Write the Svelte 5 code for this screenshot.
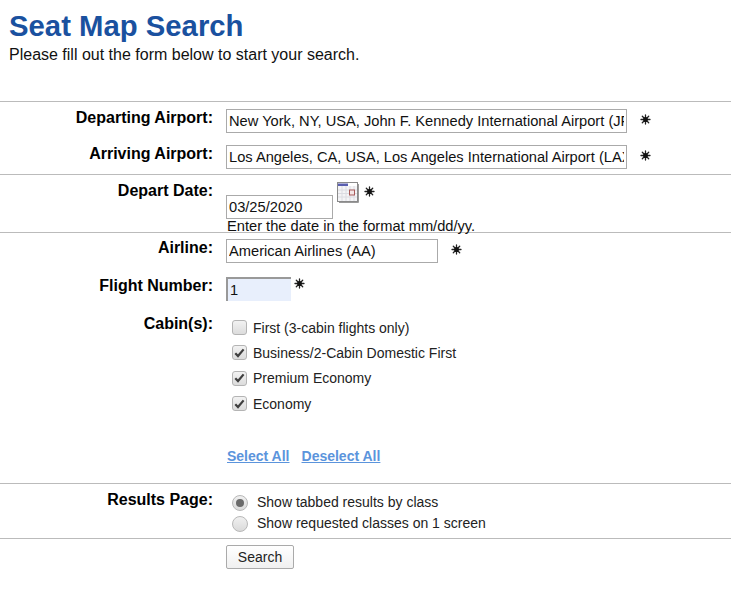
<script>
  const cabins = [
    { name: 'First (3-cabin flights only)', checked: false },
    { name: 'Business/2-Cabin Domestic First', checked: true },
    { name: 'Premium Economy', checked: true },
    { name: 'Economy', checked: true }
  ];
</script>

{#snippet req()}
  <svg class="req" width="11" height="11" viewBox="0 0 11 11" aria-hidden="true">
    <g stroke="#222" stroke-width="1.3" stroke-linecap="round">
      <path d="M5.5 1v9M1 5.5h9M2.3 2.3l6.4 6.4M8.7 2.3l-6.4 6.4" />
    </g>
    <circle cx="5.5" cy="5.5" r="2.4" fill="#111" />
  </svg>
{/snippet}

<main class="page">
  <h1>Seat Map Search</h1>
  <p class="intro">Please fill out the form below to start your search.</p>

  <form class="form" onsubmit={(e) => e.preventDefault()}>
    <section class="group airports">
      <div class="row">
        <div class="label">Departing Airport:</div>
        <div class="field">
          <input class="text wide" value="New York, NY, USA, John F. Kennedy International Airport (JFK)" />
          <span class="mark far">{@render req()}</span>
        </div>
      </div>
      <div class="row">
        <div class="label">Arriving Airport:</div>
        <div class="field">
          <input class="text wide" value="Los Angeles, CA, USA, Los Angeles International Airport (LAX)" />
          <span class="mark far">{@render req()}</span>
        </div>
      </div>
    </section>

    <section class="group date">
      <div class="row">
        <div class="label">Depart Date:</div>
        <div class="field column">
          <div class="date-line">
            <input class="text date-input" value="03/25/2020" />
            <svg class="cal" width="22" height="21" viewBox="0 0 22 21" aria-hidden="true">
              <rect x="0.5" y="0.5" width="20" height="19" fill="#f4f4f6" stroke="#8a8a8a" />
              <rect x="1" y="1" width="19" height="3" fill="#fff" />
              <rect x="1" y="1.5" width="10" height="2.5" fill="#5a5fb0" />
              <path d="M1 8h19M1 11.5h19M1 15h19M5 4v15M9 4v15M13 4v15M17 4v15" stroke="#dcdce2" stroke-width="1" />
              <rect x="12.5" y="8" width="5" height="5" fill="#f4e6e6" stroke="#a85a5a" />
              <path d="M21.5 2v18.5H2" fill="none" stroke="#9a9a9a" />
            </svg>
            <span class="mark date-mark">{@render req()}</span>
          </div>
          <div class="hint">Enter the date in the format mm/dd/yy.</div>
        </div>
      </div>
    </section>

    <section class="group flight">
      <div class="row">
        <div class="label">Airline:</div>
        <div class="field">
          <input class="text airline" value="American Airlines (AA)" />
          <span class="mark far">{@render req()}</span>
        </div>
      </div>
      <div class="row number">
        <div class="label">Flight Number:</div>
        <div class="field">
          <input class="flightno" value="1" />
          <span class="mark near">{@render req()}</span>
        </div>
      </div>
      <div class="row cabins">
        <div class="label">Cabin(s):</div>
        <div class="field column">
          {#each cabins as c}
            <label class="opt">
              <span class="box">
                {#if c.checked}
                  <svg width="11" height="10" viewBox="0 0 11 10" aria-hidden="true">
                    <path d="M1.3 5.2 4 8l5.6-6.6" fill="none" stroke="#3f3f3f" stroke-width="2.2" />
                  </svg>
                {/if}
              </span>
              <span>{c.name}</span>
            </label>
          {/each}
        </div>
      </div>
      <div class="links">
        <a href="#all">Select All</a>
        <a href="#none">Deselect All</a>
      </div>
    </section>

    <section class="group results">
      <div class="row">
        <div class="label">Results Page:</div>
        <div class="field column">
          <label class="radio"><span class="dot on"></span><span>Show tabbed results by class</span></label>
          <label class="radio"><span class="dot"></span><span>Show requested classes on 1 screen</span></label>
        </div>
      </div>
    </section>

    <section class="group actions">
      <button type="submit">Search</button>
    </section>
  </form>
</main>

<style>
  :global(body) {
    margin: 0;
    background: #fff;
    color: #000;
    font-family: "Liberation Sans", Arial, sans-serif;
  }
  .page { padding-top: 8px; }
  h1 {
    margin: 0 0 0 9px;
    font-size: 29.3px;
    line-height: 35px;
    font-weight: 700;
    color: #1a519f;
  }
  .intro {
    margin: 3px 0 0 9px;
    font-size: 16px;
    line-height: 18px;
    color: #111;
  }
  .form { margin-top: 37px; }
  .group { border-top: 1px solid #bbb; }
  .row { display: flex; }
  .label {
    width: 213px;
    flex: none;
    text-align: right;
    font-weight: 700;
    font-size: 16px;
    line-height: 18px;
  }
  .field { margin-left: 13px; display: flex; align-items: flex-start; }
  .column { flex-direction: column; }
  .text {
    box-sizing: border-box;
    height: 24px;
    border: 1px solid #aaa;
    padding: 0 2px;
    font: 14.67px "Liberation Sans", Arial, sans-serif;
    color: #111;
    background: #fff;
    outline: none;
  }
  .wide { width: 401px; }
  .date-input { width: 107px; margin-top: 13px; }
  .airline { width: 212px; }
  .mark { display: block; line-height: 0; }
  .far { margin: 5px 0 0 13px; }
  .near { margin: 1px 0 0 3px; }
  .date-mark { margin: 4px 0 0 5px; }

  .airports { padding: 7px 0 7px; height: 58px; }
  .airports .row + .row { margin-top: 12px; }
  .airports .label { padding-top: 0; }

  .date { padding-top: 7px; height: 50px; }
  .date-line { display: flex; align-items: flex-start; height: 37px; }
  .cal { margin: 0 0 0 4px; }
  .hint { font-size: 14.67px; line-height: 17px; margin: -1px 0 0 1px; color: #111; }

  .flight { padding-top: 6px; height: 244px; }
  .number { margin-top: 14px; }
  .flightno {
    box-sizing: border-box;
    width: 65px;
    height: 24px;
    border: 0;
    border-top: 2px solid #999;
    border-left: 2px solid #999;
    background: #e8effc;
    padding: 0 0 0 2px;
    font: 14.67px "Liberation Sans", Arial, sans-serif;
    color: #111;
    outline: none;
  }
  .cabins { margin-top: 14px; }
  .opt {
    display: flex;
    align-items: center;
    height: 25.3px;
    font-size: 14px;
    color: #222;
    margin-left: 6px;
    gap: 6px;
  }
  .box {
    box-sizing: border-box;
    width: 15px;
    height: 15px;
    border: 1px solid #b4b4b4;
    border-radius: 3px;
    background: linear-gradient(#f2f2f2, #dcdcdc);
    display: flex;
    align-items: center;
    justify-content: center;
  }
  .links { margin: 32px 0 0 227px; display: flex; gap: 12px; }
  .links a { color: #5b94dc; font-weight: 700; font-size: 14px; line-height: 16px; text-decoration: underline; }

  .results { padding-top: 7px; height: 47px; }
  .radio {
    display: flex;
    align-items: center;
    margin-left: 6px;
    gap: 9px;
    height: 21px;
    font-size: 14px;
    color: #222;
  }
  .dot {
    box-sizing: border-box;
    width: 16px;
    height: 16px;
    border: 1px solid #b8b8b8;
    border-radius: 50%;
    background: linear-gradient(#f0f0f0, #dadada);
    display: flex;
    align-items: center;
    justify-content: center;
    margin-top: 3px;
  }
  .dot.on::after {
    content: "";
    width: 8px;
    height: 8px;
    border-radius: 50%;
    background: #6a6a6a;
  }
  .actions { padding: 6px 0 0 226px; height: 40px; }
  button {
    box-sizing: border-box;
    width: 68px;
    height: 24px;
    border: 1px solid #aaa;
    border-radius: 2px;
    background: linear-gradient(#fff, #f0f0f0);
    font: 14px "Liberation Sans", Arial, sans-serif;
    color: #222;
    padding: 0;
  }
</style>
